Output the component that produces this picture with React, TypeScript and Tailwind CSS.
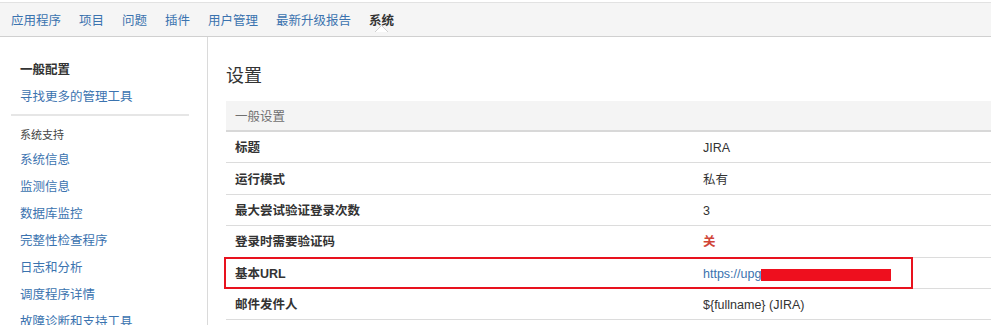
import React from "react";

const FONT = '"Liberation Sans", "Noto Sans CJK SC", Arial, sans-serif';

const tabs = ["应用程序", "项目", "问题", "插件", "用户管理", "最新升级报告"];

const sideLinks = [
  "系统信息",
  "监测信息",
  "数据库监控",
  "完整性检查程序",
  "日志和分析",
  "调度程序详情",
  "故障诊断和支持工具",
];

function Row({
  label,
  children,
  highlight,
}: {
  label: string;
  children: React.ReactNode;
  highlight?: boolean;
}) {
  return (
    <div className="relative grid grid-cols-[468px_1fr] h-[31.4px] border-b border-[#dcdcdc] items-center pt-[3px]">
      <div className="pl-[9px] font-bold text-[#333]">{label}</div>
      <div className="pl-[9px] text-[#333]">{children}</div>
      {highlight && (
        <div className="absolute left-[-2px] top-[-1px] w-[689px] h-[32px] border-2 border-[#e8121e] pointer-events-none" />
      )}
    </div>
  );
}

export default function App() {
  return (
    <div
      className="w-[991px] h-[325px] overflow-hidden bg-white text-[12.5px] text-[#333]"
      style={{ fontFamily: FONT }}
    >
      {/* top nav */}
      <div className="pt-[2px]">
        <div className="h-[35px] border-t border-b border-t-[#e2e2e2] border-b-[#d0d0d0] bg-[#f5f5f5] flex items-center pt-[3px] pl-[11px] gap-[18px]">
          {tabs.map((t) => (
            <span key={t} className="text-[#3b73af] leading-none">
              {t}
            </span>
          ))}
          <span className="relative font-bold text-[#333] leading-none">
            系统
            <svg
              className="absolute left-[6px] top-[10px]"
              width="13"
              height="7"
              viewBox="0 0 13 7"
            >
              <polygon points="0,7 6.5,0.5 13,7" fill="#ffffff" />
              <polyline points="0,7 6.5,0.5 13,7" fill="none" stroke="#d0d0d0" strokeWidth="1" />
            </svg>
          </span>
        </div>
      </div>

      <div className="flex h-[288px]">
        {/* sidebar */}
        <div className="w-[208px] shrink-0 border-r border-[#dadada] pt-[19.5px]">
          <div className="pl-[20px] h-[27px] leading-[27px] font-bold text-[#333]">一般配置</div>
          <div className="pl-[20px] h-[27px] leading-[27px] text-[#3b73af]">寻找更多的管理工具</div>
          <div className="ml-[11px] w-[178px] mt-[3px] h-[2px] bg-[#e6e6e6]" />
          <div className="pl-[20px] mt-[9px] h-[20px] leading-[20px] text-[11px] text-[#444]">系统支持</div>
          <div className="mt-[2px]">
            {sideLinks.map((l) => (
              <div key={l} className="pl-[20px] h-[27px] leading-[27px] text-[#3b73af]">
                {l}
              </div>
            ))}
          </div>
        </div>

        {/* main */}
        <div className="flex-1 pl-[18px]">
          <div className="mt-[27px] h-[24px] leading-[24px] text-[18px] text-[#333]">设置</div>
          <div className="mt-[13px]">
            <div className="h-[31px] bg-[#f4f4f4] border-b-2 border-[#d8d8d8] flex items-center pt-[3px] pl-[9px] text-[#707070]">
              一般设置
            </div>
            <Row label="标题">JIRA</Row>
            <Row label="运行模式">私有</Row>
            <Row label="最大尝试验证登录次数">3</Row>
            <Row label="登录时需要验证码">
              <span className="font-bold text-[#d04437]">关</span>
            </Row>
            <Row label="基本URL" highlight>
              <span className="text-[#3b73af]">https://upg</span>
              <span className="inline-block align-middle w-[130px] h-[12px] bg-[#ee0f1e]" />
            </Row>
            <Row label="邮件发件人">{"${fullname} (JIRA)"}</Row>
          </div>
        </div>
      </div>
    </div>
  );
}
